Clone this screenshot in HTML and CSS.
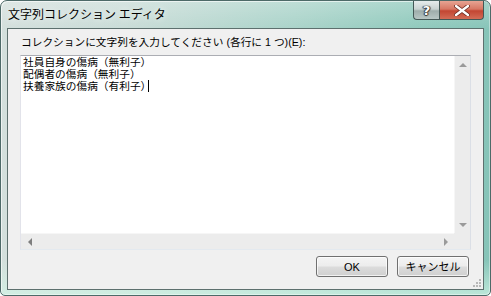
FILE: index.html
```html
<!DOCTYPE html>
<html lang="ja">
<head>
<meta charset="utf-8">
<title>文字列コレクション エディタ</title>
<link rel="stylesheet" href="styles.css">
</head>
<body>
<div class="window">
  <div class="titlebar">
    <span class="title">文字列コレクション エディタ</span>
    <div class="controls">
      <div class="cbtn help"><span>?</span></div>
      <div class="cbtn close">
        <svg width="16" height="11" viewBox="0 0 16 11"><path d="M2 1 L14 10 M14 1 L2 10" stroke="#6a2a20" stroke-width="4" stroke-linecap="round"/><path d="M2 1 L14 10 M14 1 L2 10" stroke="#ffffff" stroke-width="2.4" stroke-linecap="round"/></svg>
      </div>
    </div>
  </div>
  <div class="client">
    <div class="label">コレクションに文字列を入力してください (各行に 1 つ)(E):</div>
    <div class="textbox">
      <div class="main-row">
        <div class="text">
          <div class="line">社員自身の傷病（無利子）</div>
          <div class="line">配偶者の傷病（無利子）</div>
          <div class="line">扶養家族の傷病（有利子）<span class="caret"></span></div>
        </div>
        <div class="vscroll">
          <div class="arrow-box"><span class="tri up"></span></div>
          <div class="arrow-box"><span class="tri down"></span></div>
        </div>
      </div>
      <div class="hscroll-row">
        <div class="hscroll">
          <div class="arrow-box h"><span class="tri left"></span></div>
          <div class="arrow-box h"><span class="tri right"></span></div>
        </div>
        <div class="corner"></div>
      </div>
    </div>
    <div class="buttons">
      <div class="button">OK</div>
      <div class="button">キャンセル</div>
    </div>
    <svg class="grip" width="8" height="8" viewBox="0 0 8 8">
      <g fill="#b8b8b8">
        <rect x="6" y="0" width="2" height="2"/>
        <rect x="3" y="3" width="2" height="2"/><rect x="6" y="3" width="2" height="2"/>
        <rect x="0" y="6" width="2" height="2"/><rect x="3" y="6" width="2" height="2"/><rect x="6" y="6" width="2" height="2"/>
      </g>
    </svg>
  </div>
</div>
</body>
</html>
```
FILE: styles.css
```css
html, body {
  margin: 0;
  padding: 0;
  background: #ffffff;
}
body {
  font-family: "Liberation Sans", "Noto Sans CJK JP", sans-serif;
  font-size: 10.7px;
  color: #000000;
}
.window {
  box-sizing: border-box;
  width: 491px;
  height: 296px;
  border: 1px solid #4d6a68;
  border-radius: 7px 7px 5px 5px;
  padding: 0 6px 5px 6px;
  display: flex;
  flex-direction: column;
  background:
    linear-gradient(to bottom, rgba(255,255,255,0.25) 0%, rgba(255,255,255,0) 10%, rgba(255,255,255,0) 88%, rgba(210,245,230,0.7) 100%),
    linear-gradient(to right, #d3dfdc 0%, #c9dcd7 25%, #a9d3c9 60%, #8fc9bc 85%, #86c4b8 100%);
  box-shadow: inset 1px 1px 0 rgba(255,255,255,0.6), inset -1px -1px 0 rgba(255,255,255,0.4);
}
.titlebar {
  height: 27px;
  margin: 0 -6px;
  display: flex;
  align-items: flex-start;
  justify-content: space-between;
}
.title {
  font-family: "Noto Sans CJK JP", sans-serif;
  font-size: 12px;
  line-height: 16px;
  padding: 5px 0 0 7px;
  color: #000000;
  text-shadow: 0 0 6px rgba(255,255,255,0.9);
}
.controls {
  display: flex;
  margin-right: 6px;
}
.cbtn {
  box-sizing: border-box;
  height: 19px;
  border: 1px solid #445856;
  border-top: none;
  display: flex;
  align-items: center;
  justify-content: center;
}
.help {
  width: 26px;
  border-right: none;
  border-radius: 0 0 0 4px;
  background: linear-gradient(to bottom, #e6ecec 0%, #c9d3d2 45%, #9eadab 55%, #b9c7c5 100%);
}
.help span {
  font-family: "DejaVu Sans", sans-serif;
  font-weight: bold;
  font-size: 13px;
  line-height: 13px;
  color: #ffffff;
  text-shadow: 0 0 1px #333, 1px 0 1px #333, -1px 0 1px #333, 0 1px 1px #333;
}
.close {
  width: 45px;
  border-radius: 0 0 4px 0;
  background: linear-gradient(to bottom, #e7a493 0%, #d77764 45%, #c34632 55%, #d36c56 100%);
}
.client {
  position: relative;
  box-sizing: border-box;
  flex: 1;
  border: 1px solid #5d706e;
  background: #f0f0f0;
  padding: 7px 12px 0 12px;
  display: flex;
  flex-direction: column;
}
.label {
  line-height: 13px;
  height: 13px;
  padding-left: 1px;
  margin-bottom: 6px;
  white-space: nowrap;
}
.textbox {
  box-sizing: border-box;
  height: 195px;
  border: 1px solid;
  border-color: #abadb3 #dbdfe6 #e3e9ef #e2e3ea;
  background: #ffffff;
  display: flex;
  flex-direction: column;
}
.main-row {
  flex: 1;
  display: flex;
}
.text {
  flex: 1;
  padding: 0 0 0 2px;
}
.line {
  line-height: 12px;
  height: 12px;
  white-space: nowrap;
  display: flex;
  align-items: center;
}
.caret {
  display: inline-block;
  width: 1px;
  height: 12px;
  background: #000000;
  margin-left: -3px;
}
.vscroll {
  width: 16px;
  background: #ececec;
  border-left: 1px solid #f6f6f6;
  box-sizing: border-box;
  display: flex;
  flex-direction: column;
  justify-content: space-between;
}
.arrow-box {
  height: 17px;
  display: flex;
  align-items: center;
  justify-content: center;
}
.arrow-box.h {
  height: auto;
  width: 17px;
}
.hscroll-row {
  height: 16px;
  display: flex;
}
.hscroll {
  flex: 1;
  background: #ececec;
  border-top: 1px solid #f6f6f6;
  display: flex;
  justify-content: space-between;
}
.corner {
  width: 16px;
  background: #ececec;
}
.tri {
  width: 0;
  height: 0;
  border-style: solid;
}
.tri.up {
  border-width: 0 4px 4px 4px;
  border-color: transparent transparent #9a9a9a transparent;
}
.tri.down {
  border-width: 4px 4px 0 4px;
  border-color: #9a9a9a transparent transparent transparent;
}
.tri.left {
  border-width: 4px 4px 4px 0;
  border-color: transparent #7e7e7e transparent transparent;
}
.tri.right {
  border-width: 4px 0 4px 4px;
  border-color: transparent transparent transparent #9a9a9a;
}
.buttons {
  margin-top: 6px;
  display: flex;
  justify-content: flex-end;
  gap: 9px;
  padding-right: 2px;
}
.button {
  box-sizing: border-box;
  width: 72px;
  height: 21px;
  border: 1px solid #707070;
  border-radius: 3px;
  background: linear-gradient(to bottom, #f4f4f4 0%, #ececec 48%, #dcdcdc 52%, #cfcfcf 100%);
  box-shadow: inset 0 0 0 1px rgba(255,255,255,0.7);
  display: flex;
  align-items: center;
  justify-content: center;
  line-height: 12px;
  font-size: 11px;
}
.grip {
  position: absolute;
  right: 2px;
  bottom: 2px;
}
```
